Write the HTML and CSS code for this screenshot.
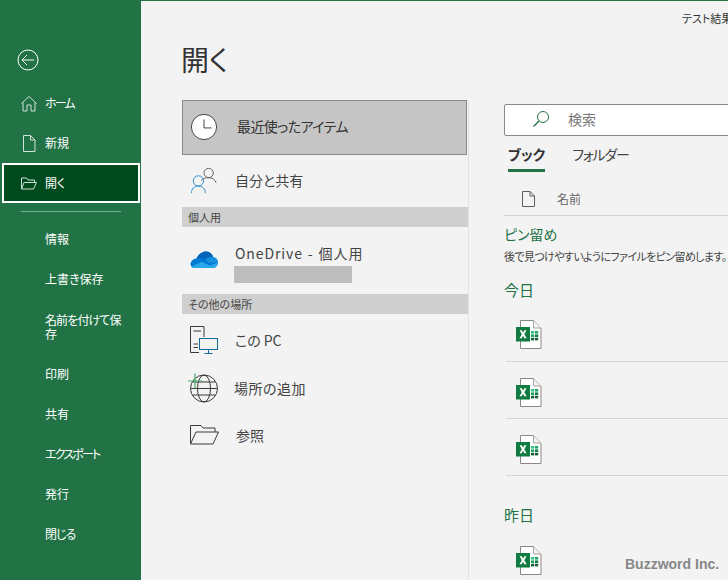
FILE: index.html
```html
<!DOCTYPE html>
<html lang="ja">
<head>
  <meta charset="UTF-8" />
  <meta name="viewport" content="width=device-width, initial-scale=1" />
  <title>開く</title>
  <link rel="stylesheet" href="styles.css">
</head>
<body>
  <svg class="defs" width="0" height="0">
    <symbol id="xl" viewBox="0 0 26 29">
      <path d="M4.5 .5H17.5L25 8V28.5H4.5Z" fill="#fff" stroke="#8a8886"/>
      <path d="M17.5 .5V8H25" fill="#f3f2f1" stroke="#a8a6a4"/>
      <rect x="15" y="11" width="3.2" height="2.6" fill="#33c481"/>
      <rect x="19" y="11" width="3.2" height="2.6" fill="#21a366"/>
      <rect x="15" y="14.4" width="3.2" height="2.6" fill="#21a366"/>
      <rect x="19" y="14.4" width="3.2" height="2.6" fill="#107c41"/>
      <rect x="15" y="17.8" width="3.2" height="2.6" fill="#185c37"/>
      <rect x="19" y="17.8" width="3.2" height="2.6" fill="#185c37"/>
      <rect x="0" y="7" width="14" height="14.5" fill="#107c41"/>
      <path d="M3.6 10.2H5.9L7.1 12.7L8.3 10.2H10.5L8.3 14.2L10.6 18.2H8.3L7 15.7L5.7 18.2H3.5L5.8 14.2Z" fill="#fff"/>
    </symbol>
  </svg>

  <div class="backstage">
    <!-- メニュー -->
    <nav class="side">
      <div class="back">
        <svg width="22" height="22" viewBox="0 0 22 22" fill="none" stroke="#fff" stroke-width="1">
          <circle cx="11" cy="11" r="10"/>
          <path d="M17 11H5M10 6L5 11L10 16"/>
        </svg>
      </div>
      <a class="nav-item">
        <svg width="17" height="17" viewBox="0 0 17 17" fill="none" stroke="#cfe3d8">
          <path d="M1 8.5L8.5 1.5L16 8.5M2.5 7.5V16H6.5V10H10.5V16H14.5V7.5"/>
        </svg>
        <span class="narrower">ホーム</span>
      </a>
      <a class="nav-item">
        <svg width="17" height="17" viewBox="0 0 17 17" fill="none" stroke="#cfe3d8">
          <path d="M3 .5H10L14.5 5V16.5H3ZM10 .5V5H14.5"/>
        </svg>
        <span>新規</span>
      </a>
      <a class="nav-item active">
        <svg width="17" height="17" viewBox="0 0 17 17" fill="none" stroke="#cfe3d8">
          <path d="M1 14V3H6L7.5 5H14V7.5M1 14H13L16 7.5H3.5L1 14Z"/>
        </svg>
        <span>開く</span>
      </a>
      <div class="sep"></div>
      <a class="nav-item">情報</a>
      <a class="nav-item">上書き保存</a>
      <a class="nav-item tall narrow">名前を付けて保存</a>
      <a class="nav-item">印刷</a>
      <a class="nav-item">共有</a>
      <a class="nav-item narrower">エクスポート</a>
      <a class="nav-item">発行</a>
      <a class="nav-item narrow">閉じる</a>
    </nav>

    <main class="content">
      <div class="doc-title">テスト結果 - Excel</div>
      <h1>開く</h1>
      <div class="columns">

        <!-- 場所 -->
        <section class="places">
          <div class="place selected">
            <svg width="28" height="28" viewBox="0 0 30 30" fill="#fff" stroke="#3b3a39">
              <circle cx="15" cy="15" r="13.5"/>
              <path d="M15 7V16H23" fill="none"/>
            </svg>
            <span>最近使ったアイテム</span>
          </div>
          <div class="place shared">
            <svg width="28" height="28" viewBox="0 0 30 30" fill="none">
              <circle cx="20" cy="7.5" r="5" stroke="#605e5c"/>
              <path d="M12 15.5C14 13.5 16 12.5 20 12.5C24 12.5 27 14.5 28 18" stroke="#605e5c"/>
              <circle cx="9" cy="16" r="5.5" stroke="#2b88c8"/>
              <path d="M1.5 29C1.5 24.5 4.5 21.5 9 21.5C13.5 21.5 16.5 24.5 16.5 29" stroke="#2b88c8"/>
            </svg>
            <span>自分と共有</span>
          </div>
          <div class="group">個人用</div>
          <div class="place onedrive">
            <svg width="28" height="19" viewBox="0 0 30 20">
              <path d="M5 19C1 19 0 15.5 1 13C2 10.5 4.5 9 7 9C9 4 14 1 18 1.5C21.5 2 24 4.500 24.800 7.500C27.500 7.500 30 10 29.800 13.500C29.700 16.500 27.500 19 25 19Z" fill="#0078d4"/>
              <path d="M7 9C9 4 14 1 18 1.500C21.500 2 24 4.500 24.800 7.500C21 7 18 8 16.500 10L12 8C10.500 8 9 8.200 7 9Z" fill="#0364b8"/>
              <path d="M16.500 10C18 8 21 7 24.800 7.500C27.500 7.500 30 10 29.800 13.500L21 14Z" fill="#1490df"/>
              <path d="M4 19C3 19 2 18.500 1.600 17.800L12.500 12.500L21 16.500L29.700 13.500C29.700 16.500 27.500 19 25 19Z" fill="#28a8ea"/>
            </svg>
            <div class="account">
              <span>OneDrive - 個人用</span>
              <div class="masked"></div>
            </div>
          </div>
          <div class="group">その他の場所</div>
          <div class="place compact">
            <svg width="28" height="29" viewBox="0 0 28 29" fill="none">
              <path d="M14 11V.5H.5V26.5H9" stroke="#3b3a39"/>
              <path d="M3.5 5H11M3.5 18H8M3.5 21.5H8" stroke="#3b3a39"/>
              <rect x="9.5" y="12.5" width="18" height="11" fill="#f3f3f3" stroke="#0f6c9c"/>
              <path d="M18.5 23.5V27.5M14.5 27.5H22.5" stroke="#0f6c9c"/>
            </svg>
            <span>この PC</span>
          </div>
          <div class="place compact globe">
            <svg width="30" height="31" viewBox="0 0 30 31" fill="none" stroke="#3b3a39">
              <circle cx="16" cy="15.5" r="13.5"/>
              <ellipse cx="16" cy="15.5" rx="6.5" ry="13.5"/>
              <path d="M2.5 15.5H29.5M4.5 9H27.5M4.5 22H27.5"/>
              <path d="M7 .5V15.5M0 8H14.5" stroke="#43a963" stroke-width="1.2"/>
            </svg>
            <span>場所の追加</span>
          </div>
          <div class="place compact browse">
            <svg width="29" height="20" viewBox="0 0 29 20" fill="none" stroke="#3b3a39">
              <path d="M.5 19V.5H11L13 3H25V7M.5 19H23L28.5 7H6L.5 19Z"/>
            </svg>
            <span>参照</span>
          </div>
        </section>

        <!-- ファイル一覧 -->
        <section class="files">
          <div class="search">
            <svg width="18" height="18" viewBox="0 0 18 18" fill="none" stroke="#217346">
              <circle cx="11" cy="7" r="5.5"/>
              <path d="M7 11L1.5 16.5" stroke-width="1.3"/>
            </svg>
            <span>検索</span>
          </div>
          <div class="tabs">
            <span class="tab current">ブック</span>
            <span class="tab folder">フォルダー</span>
          </div>
          <div class="list-head">
            <svg width="13" height="16" viewBox="0 0 13 16" fill="none" stroke="#605e5c">
              <path d="M.5 .5H8L12.5 5V15.5H.5ZM8 .5V5H12.5"/>
            </svg>
            <span>名前</span>
          </div>
          <h2 class="pin">ピン留め</h2>
          <p class="hint">後で見つけやすいようにファイルをピン留めします。</p>
          <h2 class="today">今日</h2>
          <div class="file"><svg class="xl"><use href="#xl"/></svg></div>
          <div class="file"><svg class="xl"><use href="#xl"/></svg></div>
          <div class="file"><svg class="xl"><use href="#xl"/></svg></div>
          <h2 class="yesterday">昨日</h2>
          <div class="file last"><svg class="xl"><use href="#xl"/></svg></div>
        </section>
      </div>
    </main>
  </div>
  <div class="watermark">Buzzword Inc.</div>
</body>
</html>
```

FILE: styles.css
```css
html, body {
  margin: 0;
  height: 100%;
  overflow: hidden;
}
body {
  font-family: "Noto Sans CJK JP", "Noto Sans", sans-serif;
  font-feature-settings: "palt";
  background: #f3f3f3;
  color: #444;
}
.defs {
  position: absolute;
}
.backstage {
  display: flex;
  height: 580px;
  width: 728px;
}

/* メニュー */
.side {
  width: 141px;
  flex: none;
  background: #217346;
  color: #fff;
  font-size: 12px;
  box-sizing: border-box;
  padding-top: 49px;
}
.back {
  height: 22px;
  padding-left: 17px;
  margin-bottom: 12px;
}
.back svg {
  display: block;
}
.nav-item {
  display: flex;
  align-items: center;
  gap: 7px;
  height: 40px;
  padding-left: 45px;
  box-sizing: border-box;
  line-height: 14px;
}
.nav-item svg {
  margin-left: -25px;
  width: 18px;
}
.nav-item.active {
  margin: 0 1px 0 2px;
  background: #004b1e;
  border: 2px solid #fff;
  padding-left: 41px;
}
.nav-item.tall {
  height: 55px;
  padding-right: 12px;
}
.narrow {
  letter-spacing: -.9px;
}
.narrower {
  letter-spacing: -1.8px;
}
.sep {
  height: 1px;
  background: #6fb18d;
  margin: 8px 20px 7px 21px;
}

/* 本体 */
.content {
  flex: 1;
  min-width: 0;
  border-top: 1px solid #217346;
  overflow: hidden;
}
.doc-title {
  font-size: 11px;
  line-height: 14px;
  color: #333;
  margin: 10px 0 0 541px;
  white-space: nowrap;
}
h1 {
  font-size: 28px;
  font-weight: 400;
  line-height: 40px;
  margin: 14px 0 0 40px;
  color: #333;
}
.columns {
  display: flex;
  margin: 21px 0 0 41px;
  height: 480px;
}

/* 場所 */
.places {
  width: 286px;
  flex: none;
  border-right: 1px solid #e1e1e1;
  font-size: 14px;
}
.place {
  display: flex;
  align-items: center;
  gap: 17px;
  padding-left: 8px;
  box-sizing: border-box;
}
.place svg {
  flex: none;
}
.place.selected {
  height: 55px;
  background: #c5c5c5;
  border: 1px solid #8a8a8a;
  margin-right: 1px;
  padding-left: 7px;
  gap: 19px;
  color: #333;
}
.selected svg {
  margin-bottom: 2px;
}
.selected span {
  margin-bottom: 4px;
  letter-spacing: -.6px;
}
.place.shared {
  height: 52px;
  padding-bottom: 2px;
}
.group {
  height: 20px;
  line-height: 20px;
  background: #cfcfcf;
  font-size: 11px;
  padding-left: 6px;
  color: #444;
}
.place.onedrive {
  height: 67px;
}
.onedrive svg {
  margin-top: -2px;
}
.account {
  margin-top: 5px;
}
.account span {
  display: block;
  line-height: 20px;
  margin: 0 0 3px 0;
  letter-spacing: .9px;
  word-spacing: 1px;
}
.masked {
  width: 118px;
  height: 17px;
  margin-left: -1px;
  background: #bdbdbd;
}
.place.compact {
  height: 48px;
  padding-top: 4px;
}
.place.globe {
  padding-left: 6px;
  gap: 16px;
}
.globe span {
  letter-spacing: .5px;
}
.place.browse {
  padding-top: 2px;
}

/* ファイル一覧 */
.files {
  width: 300px;
  flex: none;
  margin-left: 35px;
  padding-top: 4px;
  font-size: 12px;
}
.search {
  display: flex;
  align-items: center;
  gap: 18px;
  height: 32px;
  box-sizing: border-box;
  padding-left: 27px;
  padding-bottom: 2px;
  background: #fff;
  border: 1px solid #8a8a8a;
  border-radius: 2px;
  font-size: 14px;
  color: #777;
}
.tabs {
  display: flex;
  gap: 27px;
  margin: 8px 0 0 4px;
  font-size: 14px;
  color: #444;
}
.tab {
  line-height: 20px;
  padding-bottom: 5px;
}
.tab.current {
  font-weight: 700;
  color: #333;
  border-bottom: 3px solid #217346;
}
.tab.folder {
  letter-spacing: -1.2px;
}
.list-head {
  display: flex;
  align-items: center;
  gap: 22px;
  height: 33px;
  padding: 10px 0 0 18px;
  border-bottom: 1px solid #d4d4d4;
  color: #666;
}
h2 {
  font-weight: 400;
  font-size: 14px;
  line-height: 20px;
  color: #217346;
  margin: 0;
}
.pin {
  margin-top: 8px;
}
.hint {
  margin: 3px 0 0;
  line-height: 18px;
  font-size: 11px;
  letter-spacing: -.6px;
  color: #444;
  white-space: nowrap;
}
.today {
  font-size: 15px;
  margin-top: 15px;
}
.yesterday {
  font-size: 15px;
  margin-top: 29px;
}
.file {
  height: 57px;
  box-sizing: border-box;
  border-bottom: 1px solid #d4d4d4;
  margin-left: 2px;
  padding: 16px 0 0 10px;
}
.today + .file {
  height: 62px;
  padding-top: 20px;
}
.file.last {
  border-bottom: none;
  padding-top: 21px;
}
.xl {
  display: block;
  width: 26px;
  height: 29px;
}

.watermark {
  position: absolute;
  left: 625px;
  top: 554px;
  font-family: "Liberation Sans", sans-serif;
  font-weight: 700;
  font-size: 14px;
  line-height: 20px;
  color: #888;
}
```
